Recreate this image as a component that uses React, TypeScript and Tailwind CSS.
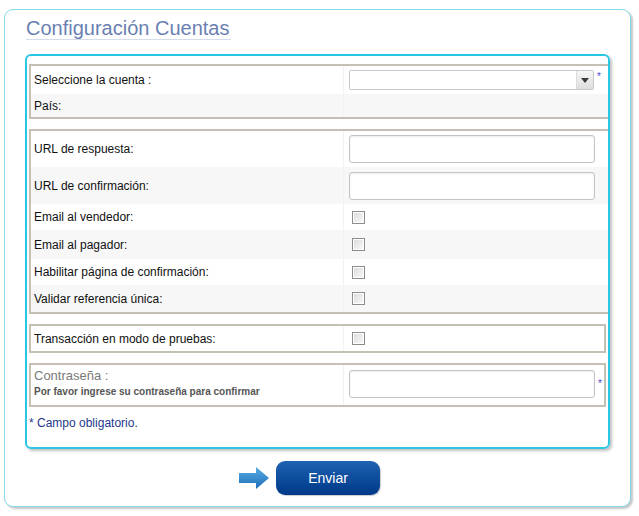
import React from "react";

const FONT = { fontFamily: '"Liberation Sans", Arial, sans-serif' };

function Checkbox() {
  return (
    <div className="h-[13px] w-[13px] border border-[#8c8c8c] bg-white p-[1px]">
      <div className="h-full w-full bg-gradient-to-br from-[#dcdcdc] to-[#f8f8f8]" />
    </div>
  );
}

function TextBox() {
  return (
    <div className="h-[28px] w-[246px] rounded-[3px] border border-[#c4c4c4] bg-white shadow-[inset_0_1px_2px_rgba(0,0,0,0.08)]" />
  );
}

type RowProps = {
  label: string;
  h: string;
  gray?: boolean;
  children?: React.ReactNode;
};

function Row({ label, h, gray, children }: RowProps) {
  return (
    <div className={`flex ${h} ${gray ? "bg-[#f7f7f7]" : "bg-white"}`}>
      <div className="flex w-[312px] items-center pl-[3px] text-[12px] text-[#111]">{label}</div>
      <div className="flex flex-1 items-center border-l border-[#f2f2f2] pl-[5px]">{children}</div>
    </div>
  );
}

function CheckRow({ label, h, gray }: { label: string; h: string; gray?: boolean }) {
  return (
    <Row label={label} h={h} gray={gray}>
      <div className="pl-[3px]">
        <Checkbox />
      </div>
    </Row>
  );
}

export default function App() {
  return (
    <div className="min-h-[516px] bg-white pt-[9px] pl-[4px]" style={FONT}>
      <div className="w-[627px] rounded-[9px] border border-[#86d9ea] bg-white pt-[7px] pb-[11px] shadow-[2px_2px_2px_rgba(0,0,0,0.22)]">
        {/* Title */}
        <div className="pl-[21px]">
          <div className="inline-block border-b border-[#d6dde9] pr-[2px] text-[20px] leading-[22px] text-[#6a7fb2]">
            Configuración Cuentas
          </div>
        </div>

        {/* Form box */}
        <div className="mt-[12px] ml-[20px] w-[585px] rounded-[6px] border-2 border-[#2bc6e4] pt-[8px] pl-[2px] pb-[17px] shadow-[2px_2px_3px_rgba(0,0,0,0.25)]">
          <div className="border-2 border-r-0 border-[#c4c0b4]">
            <Row label="Seleccione la cuenta :" h="h-[28px]">
              <div className="flex items-start">
                <div className="flex h-[20px] w-[245px] overflow-hidden rounded-[2px] border border-[#c8c8c8] bg-white">
                  <div className="flex-1" />
                  <div className="flex w-[17px] items-center justify-center border-l border-[#dcdcdc] bg-gradient-to-b from-[#f6f6f6] to-[#dedede]">
                    <div className="h-0 w-0 border-x-[4px] border-t-[5px] border-x-transparent border-t-[#3a3a3a]" />
                  </div>
                </div>
                <span className="ml-[3px] mt-[2px] text-[10px] leading-[10px] text-[#4a4ad0]">*</span>
              </div>
            </Row>
            <Row label="País:" h="h-[23px]" gray />
          </div>

          <div className="mt-[10px] border-2 border-r-0 border-[#c4c0b4]">
            <Row label="URL de respuesta:" h="h-[36px]">
              <TextBox />
            </Row>
            <Row label="URL de confirmación:" h="h-[37px]" gray>
              <TextBox />
            </Row>
            <CheckRow label="Email al vendedor:" h="h-[26px]" />
            <CheckRow label="Email al pagador:" h="h-[29px]" gray />
            <CheckRow label="Habilitar página de confirmación:" h="h-[26px]" />
            <CheckRow label="Validar referencia única:" h="h-[27px]" gray />
          </div>

          <div className="mt-[10px] mr-[2px] border-2 border-[#c4c0b4]">
            <CheckRow label="Transacción en modo de pruebas:" h="h-[25px]" />
          </div>

          <div className="mt-[10px] mr-[2px] flex h-[44px] border-2 border-[#c4c0b4] bg-white">
            <div className="flex w-[312px] flex-col pl-[3px] pt-[3px]">
              <span className="text-[13px] leading-[16px] text-[#7a7a7a]">Contraseña :</span>
              <span className="mt-[2px] text-[10px] font-bold leading-[12px] text-[#555]">
                Por favor ingrese su contraseña para confirmar
              </span>
            </div>
            <div className="flex flex-1 items-start border-l border-[#f2f2f2] pt-[5px] pl-[5px]">
              <TextBox />
              <span className="ml-[3px] mt-[9px] text-[10px] leading-[10px] text-[#4a4ad0]">*</span>
            </div>
          </div>

          <div className="mt-[9px] text-[12px] leading-[14px] text-[#25388c]">* Campo obligatorio.</div>
        </div>

        {/* Submit */}
        <div className="mt-[12px] flex items-center pl-[234px]">
          <svg width="31" height="22" viewBox="0 0 31 22">
            <defs>
              <linearGradient id="ag" x1="0" y1="0" x2="0" y2="1">
                <stop offset="0" stopColor="#58aee6" />
                <stop offset="1" stopColor="#1c6cb6" />
              </linearGradient>
            </defs>
            <path d="M0 6 H17 V0 L30 11 L17 22 V16 H0 Z" fill="url(#ag)" />
          </svg>
          <button className="ml-[6px] flex h-[34px] w-[104px] items-center justify-center rounded-[9px] bg-gradient-to-b from-[#1f62b2] to-[#003888] text-[14px] text-white shadow-[1px_1px_1px_rgba(0,0,0,0.2)]">
            Enviar
          </button>
        </div>
      </div>
    </div>
  );
}
